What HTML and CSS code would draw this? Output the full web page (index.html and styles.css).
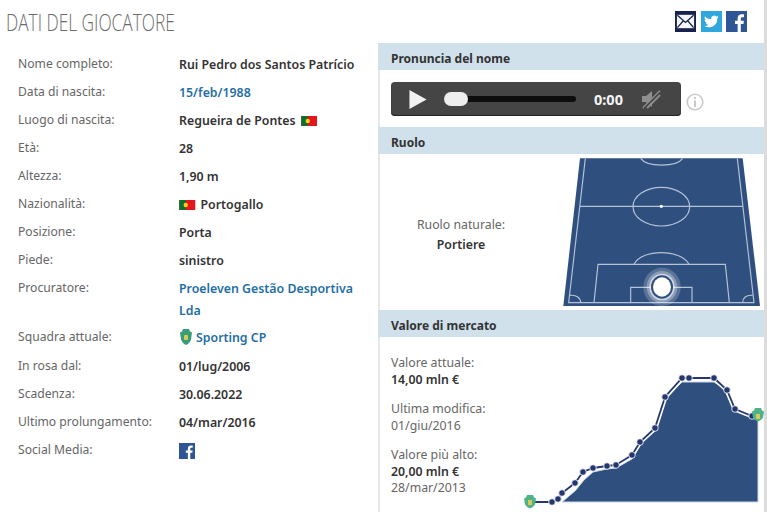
FILE: index.html
```html
<!DOCTYPE html>
<html lang="it">
<head>
<meta charset="utf-8">
<title>Dati del giocatore</title>
<link rel="stylesheet" href="styles.css">
</head>
<body>
<div class="page">
  <header class="head">
    <h1 class="title">DATI DEL GIOCATORE</h1>
    <div class="share">
      <svg class="ico" viewBox="0 0 22 22"><rect width="22" height="22" fill="#15224d"/><rect x="2" y="4" width="18" height="14" fill="#f4f6f8"/><path d="M2.5 4.500L11 12 19.500 4.500M2.500 17.500L8.500 10.500M19.500 17.500L13.500 10.500" fill="none" stroke="#15224d" stroke-width="1.300"/></svg>
      <svg class="ico" viewBox="0 0 22 22"><rect width="22" height="22" fill="#2ea7dd"/><path d="M18.500 6.300c-.6.300-1.200.4-1.800.5.600-.4 1.100-1 1.300-1.700-.6.300-1.300.6-2 .7a3.100 3.100 0 0 0-5.300 2.800C8 8.500 5.700 7.300 4.200 5.400c-.8 1.400-.4 3.200 1 4.100-.5 0-1-.1-1.400-.4 0 1.500 1.100 2.800 2.500 3.100-.5.100-.9.100-1.400 0 .4 1.200 1.500 2.100 2.900 2.100A6.300 6.300 0 0 1 3.500 15.600a8.800 8.800 0 0 0 13.600-7.800c.6-.4 1-.9 1.400-1.500z" fill="#fff"/></svg>
      <svg class="ico" viewBox="0 0 22 22"><rect width="22" height="22" fill="#2f5597"/><path d="M15.500 22v-8.500h2.800l.4-3.300h-3.200V8.100c0-1 .3-1.600 1.600-1.600h1.700V3.600c-.3 0-1.300-.1-2.400-.1-2.500 0-4.200 1.500-4.200 4.300v2.400H9.400v3.300h2.800V22z" fill="#fff"/></svg>
    </div>
  </header>
  <div class="cols">
    <dl class="info">
      <dt>Nome completo:</dt><dd>Rui Pedro dos Santos Patrício</dd>
      <dt>Data di nascita:</dt><dd><a class="link" href="#">15/feb/1988</a></dd>
      <dt>Luogo di nascita:</dt><dd>Regueira de Pontes <svg class="flag flag-after" viewBox="0 0 16 10"><rect width="16" height="10" fill="#e2161c"/><rect width="6.500" height="10" fill="#0f6f2c"/><circle cx="6.500" cy="5" r="2.200" fill="#f2d21b"/></svg></dd>
      <dt>Età:</dt><dd>28</dd>
      <dt>Altezza:</dt><dd>1,90 m</dd>
      <dt>Nazionalità:</dt><dd><svg class="flag flag-before" viewBox="0 0 16 10"><rect width="16" height="10" fill="#e2161c"/><rect width="6.500" height="10" fill="#0f6f2c"/><circle cx="6.500" cy="5" r="2.200" fill="#f2d21b"/></svg>Portogallo</dd>
      <dt>Posizione:</dt><dd>Porta</dd>
      <dt>Piede:</dt><dd>sinistro</dd>
      <dt>Procuratore:</dt><dd class="two"><a class="link" href="#">Proeleven Gestão Desportiva Lda</a></dd>
      <dt>Squadra attuale:</dt><dd class="club"><svg class="crest" viewBox="0 0 14 17"><path d="M4 1h6l1 2.500 2 1-1 7C11 14.500 9 16 7 17c-2-1-4-2.500-5-5.500l-1-7 2-1z" fill="#3a9d78"/><rect x="5" y="7" width="4" height="5" rx="1" fill="#d8c95a"/></svg><a class="link" href="#">Sporting CP</a></dd>
      <dt>In rosa dal:</dt><dd>01/lug/2006</dd>
      <dt>Scadenza:</dt><dd>30.06.2022</dd>
      <dt>Ultimo prolungamento:</dt><dd>04/mar/2016</dd>
      <dt>Social Media:</dt><dd><svg class="fb" viewBox="0 0 22 22"><rect width="22" height="22" fill="#2f5597"/><path d="M15.500 22v-8.500h2.800l.4-3.300h-3.200V8.100c0-1 .3-1.600 1.600-1.600h1.700V3.600c-.3 0-1.300-.1-2.400-.1-2.500 0-4.200 1.500-4.200 4.300v2.400H9.400v3.300h2.800V22z" fill="#fff"/></svg></dd>
    </dl>
    <aside class="side">
      <h2 class="bar">Pronuncia del nome</h2>
      <div class="audio-row">
        <div class="player">
          <svg class="play" viewBox="0 0 20 22"><path d="M1 1L19 11 1 21z" fill="#f1f1f1"/></svg>
          <div class="track"><span class="knob"></span></div>
          <span class="time">0:00</span>
          <svg class="mute" viewBox="0 0 20 20"><path d="M1 7h4l6-5v16l-6-5H1z" fill="#8e8e8e"/><path d="M2 19L19 2M6 19L19 6" stroke="#8e8e8e" stroke-width="2"/><path d="M3 19.500L19 3.500" stroke="#444" stroke-width="1.500"/></svg>
        </div>
        <svg class="info-ico" viewBox="0 0 18 18"><circle cx="9" cy="9" r="7.800" fill="none" stroke="#c9c9c9" stroke-width="1.600"/><rect x="8" y="7.500" width="2" height="6.500" fill="#c9c9c9"/><rect x="8" y="4" width="2" height="2" fill="#c9c9c9"/></svg>
      </div>
      <h2 class="bar">Ruolo</h2>
      <div class="role">
        <div class="role-text"><div class="muted">Ruolo naturale:</div><div class="strong">Portiere</div></div>
        <svg class="pitch" viewBox="0 12 651 468">
          <path d="M90 25H578L630 468H40z" fill="#2f4f7f"/>
          <g fill="none" stroke="#b4c3d6" stroke-width="3.500">
            <path d="M106 25L56 458H612L562 25"/>
            <path d="M90 169H578"/>
            <ellipse cx="334" cy="170" rx="85" ry="58"/>
            <path d="M272 25C290 52 380 52 398 25"/>
            <path d="M132 458L144 343H526L538 458"/>
            <path d="M242 458V412H426V458"/>
            <path d="M252 343C275 296 392 296 417 343"/>
            <path d="M60 436C80 434 92 444 92 458M608 436C588 434 578 444 578 458"/>
          </g>
          <circle cx="334" cy="169" r="5" fill="#fff"/>
          <g fill="#fff">
            <ellipse cx="336" cy="411" rx="56" ry="58" fill-opacity=".2"/>
            <ellipse cx="336" cy="411" rx="46" ry="48" fill-opacity=".3"/>
            <ellipse cx="336" cy="411" rx="38" ry="40" fill-opacity=".6"/>
          </g>
          <ellipse cx="336" cy="411" rx="33" ry="35" fill="#2f4f7f"/>
          <ellipse cx="336" cy="411" rx="27" ry="29" fill="#fff"/>
        </svg>
      </div>
      <h2 class="bar">Valore di mercato</h2>
      <div class="market">
        <div class="market-text">
          <p class="stat"><span class="muted">Valore attuale:</span><br><b>14,00 mln €</b></p>
          <p class="stat"><span class="muted">Ultima modifica:</span><br><span class="muted">01/giu/2016</span></p>
          <p class="stat"><span class="muted">Valore più alto:</span><br><b>20,00 mln €</b><br><span class="muted">28/mar/2013</span></p>
        </div>
        <svg class="chart" viewBox="0 0 257 152">
          <path d="M52 142L59 136L65 131L74 120L83 112L97 109L106 108L122 99L130 85L145 70L154 38L172 22H204L216 30L225 50L248 58V142z" fill="#2f4f7f" stroke="#c9d8e8" stroke-width="1"/>
          <path d="M20 142H42L48 139L52 133L65 123L73 112L83 108L97 106L106 105L122 95L130 82L145 68L155 37L172 18H204L217 30L225 49L242 56L248 58" fill="none" stroke="#fff" stroke-width="5"/>
          <path d="M20 142H42L48 139L52 133L65 123L73 112L83 108L97 106L106 105L122 95L130 82L145 68L155 37L172 18H204L217 30L225 49L242 56L248 58" fill="none" stroke="#25376f" stroke-width="1.800"/>
          <g fill="#25376f" stroke="#fff" stroke-width=".8">
            <circle cx="42" cy="142" r="3.300"/><circle cx="48" cy="139" r="3.300"/><circle cx="52" cy="133" r="3.300"/><circle cx="65" cy="123" r="3.300"/><circle cx="73" cy="112" r="3.300"/><circle cx="83" cy="108" r="3.300"/><circle cx="97" cy="106" r="3.300"/><circle cx="106" cy="105" r="3.300"/><circle cx="122" cy="95" r="3.300"/><circle cx="130" cy="82" r="3.300"/><circle cx="145" cy="68" r="3.300"/><circle cx="155" cy="37" r="3.300"/><circle cx="172" cy="18" r="3.300"/><circle cx="179" cy="18" r="3.300"/><circle cx="204" cy="18" r="3.300"/><circle cx="217" cy="30" r="3.300"/><circle cx="225" cy="49" r="3.300"/><circle cx="242" cy="56" r="3.300"/>
          </g>
          <g>
            <path d="M17 135h6l1 2.500 2 1-1 6c-1 2-3 3-5 4-2-1-4-2-5-4l-1-6 2-1z" fill="#4fb38a"/><rect x="18" y="140" width="4" height="5" fill="#d8c95a"/>
            <path d="M245 48h6l1 2.500 2 1-1 6c-1 2-3 3-5 4-2-1-4-2-5-4l-1-6 2-1z" fill="#4fb38a"/><rect x="246" y="54" width="4" height="5" fill="#d8c95a"/>
          </g>
        </svg>
      </div>
    </aside>
  </div>
</div>
</body>
</html>
```
FILE: styles.css
```css
html, body { margin: 0; padding: 0; height: 100%; background: #fff; overflow: hidden; }
body { font-family: "Noto Sans", "Open Sans", sans-serif; font-size: 12.300px; color: #333; }
.page { width: 764px; height: 512px; border-right: 3px solid #dcdcdc; overflow: hidden; }
.head { height: 43px; display: flex; align-items: flex-start; justify-content: space-between; }
.title { margin: 9px 0 0 6px; font-family: "Open Sans", sans-serif; font-weight: 300; font-size: 23.500px; line-height: 26px; color: #6b6b6b; transform-origin: left; transform: scaleX(.735); white-space: nowrap; width: 170px; }
.share { display: flex; gap: 4.500px; margin: 11px 17px 0 0; }
.ico { width: 21px; height: 21px; display: block; }
.cols { display: flex; align-items: flex-start; }
.info { width: 378px; margin: 0; padding: 8px 0 0 18px; box-sizing: border-box; display: grid; grid-template-columns: 161px 1fr; grid-auto-rows: minmax(28px, auto); flex: none; }
.info dt { color: #666; line-height: 28px; height: 28px; margin-top: -1px; font-size: 12.150px; }
.info dd { margin: 0; font-weight: 600; color: #333; line-height: 28px; display: flex; align-items: center; font-size: 12.350px; }
.info dd.two { display: block; line-height: 22px; padding: 3px 16px 2px 0; }
.info dd.club { height: 29px; align-items: flex-start; }
.link { color: #1f6ea6; text-decoration: none; }
.flag { width: 16.500px; height: 10px; flex: none; }
.flag-after { margin-left: 5px; }
.flag-before { margin-right: 5px; }
.crest { width: 14px; height: 17px; margin: 4px 3px 0 0; flex: none; }
.fb { width: 16px; height: 16px; display: block; }
.side { flex: 1; border-left: 2px solid #e3e8ee; min-width: 0; }
.bar { margin: 0 0 0 -2px; height: 27px; line-height: 31px; background: #d0e1ec; padding-left: 13px; font-size: 12px; font-weight: 700; color: #333; overflow: hidden; }
.audio-row { height: 57px; display: flex; align-items: flex-start; padding: 12px 0 0 11px; box-sizing: border-box; }
.player { width: 290px; height: 34px; background: #454545; border-radius: 4px; display: flex; align-items: center; box-shadow: inset 0 -1px 1px #222; flex: none; }
.play { width: 20px; height: 21px; margin-left: 17px; flex: none; }
.track { width: 132px; height: 6px; background: #0d0d0d; margin-left: 16px; border-radius: 3px; position: relative; flex: none; }
.knob { position: absolute; left: 0; top: -4px; width: 24px; height: 14px; border-radius: 7px; background: #eee; }
.time { color: #f4f4f4; font-weight: 700; font-size: 14.500px; margin-left: 18px; width: 47px; }
.mute { width: 20px; height: 20px; flex: none; }
.info-ico { width: 18px; height: 18px; margin: 11px 0 0 5px; flex: none; }
.role { height: 156px; display: flex; align-items: center; }
.role-text { width: 162px; text-align: center; flex: none; line-height: 20px; padding-top: 6px; }
.muted { color: #666; }
.strong { font-weight: 600; color: #333; }
.pitch { width: 217px; height: 156px; margin-left: 8px; display: block; flex: none; }
.market { display: flex; align-items: flex-start; height: 175px; }
.market-text { width: 130px; padding: 18px 0 0 11px; flex: none; box-sizing: border-box; }
.stat { margin: 0 0 13px; line-height: 16.500px; }
.stat b { font-weight: 600; color: #333; }
.chart { width: 257px; height: 152px; margin: 23px 0 0 0; display: block; flex: none; }
```
